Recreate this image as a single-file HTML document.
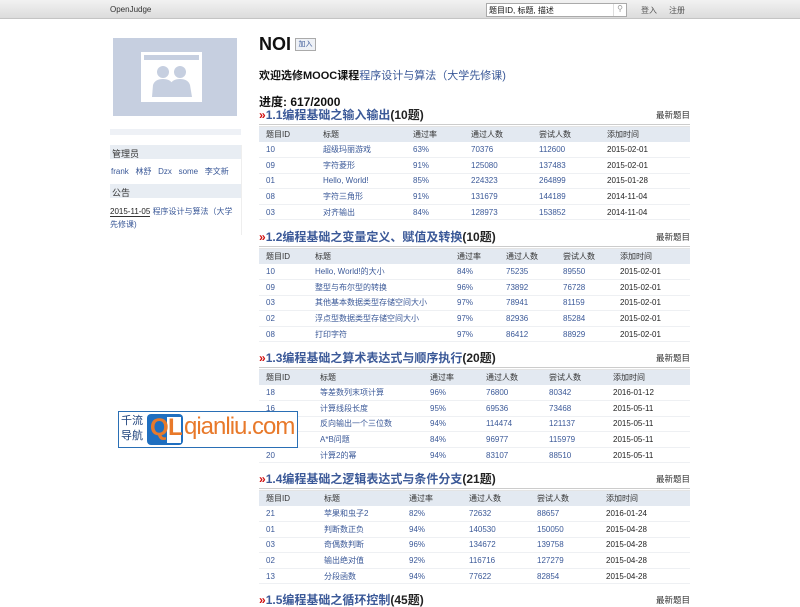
<!DOCTYPE html>
<html><head><meta charset="utf-8"><style>
*{margin:0;padding:0;box-sizing:border-box}
body{width:800px;height:599px;overflow:hidden;background:#fff;font-family:"Liberation Sans","Noto Sans CJK SC",sans-serif;position:relative;color:#222}
.top{position:absolute;left:0;top:0;width:800px;height:19px;background:linear-gradient(#f2f2f2,#dcdcdc);border-bottom:1px solid #c4c4c4}
.a{position:absolute;white-space:nowrap}
a,.lk{color:#3b5998;text-decoration:none}
.sec{position:absolute;left:259px;width:431px}
.sec h2{position:absolute;left:0;top:0;font-size:12px;font-weight:bold;color:#222;height:13px;line-height:13px;white-space:nowrap}
.sec h2 .r{color:#d01010}
.sec h2 .t{color:#3b5998}
.sec .new{position:absolute;right:0;top:1px;font-size:8.5px;line-height:11px;color:#333}
.sec .bl{position:absolute;left:0;top:15px;width:431px;height:3px;border-top:1px solid #ccc;border-bottom:1px solid #e4e4e4}
.sec table{position:absolute;left:0;top:18px;width:431px;border-collapse:collapse;font-size:8px;table-layout:fixed}
.sec th{background:#e3e9f1;font-weight:normal;text-align:left;height:15px;padding-left:7px;color:#333}
.sec td{height:15.6px;padding-left:7px;color:#3b5998;border-bottom:1px solid #eef0f3;white-space:nowrap;overflow:hidden}
.sec td:last-child{color:#222}
</style></head><body>
<div class="top"></div>
<div class="a" style="left:110px;top:5px;font-size:8px;color:#333">OpenJudge</div>
<div class="a" style="left:486px;top:3px;width:141px;height:14px;border:1px solid #aaa;background:#fff"></div>
<div class="a" style="left:489px;top:5px;font-size:8px;color:#111">题目ID, 标题, 描述</div>
<div class="a" style="left:613px;top:4px;width:13px;height:12px;border-left:1px solid #ddd;font-size:8px;color:#999;text-align:center">&#9906;</div>
<div class="a" style="left:641px;top:5px;font-size:8px;color:#555">登入</div>
<div class="a" style="left:669px;top:5px;font-size:8px;color:#555">注册</div>

<div class="a" style="left:113px;top:38px;width:124px;height:78px;background:#c6cfe0"></div>
<div class="a" style="left:141px;top:52px;width:61px;height:50px;background:#fff"></div>
<div class="a" style="left:144px;top:55px;width:55px;height:5px;background:#c6cfe0"></div>
<svg class="a" style="left:150px;top:63px" width="44" height="34"><g fill="#c6cfe0"><circle cx="13" cy="9" r="6"/><path d="M2 34 L3 22 Q5 16 13 16 Q21 16 23 22 L24 34Z"/><circle cx="30" cy="9" r="6"/><path d="M19 34 L20 22 Q22 16 30 16 Q38 16 40 22 L42 34Z"/></g></svg>
<div class="a" style="left:110px;top:129px;width:131px;height:6px;background:#eef1f6"></div>
<div class="a" style="left:241px;top:145px;width:1px;height:90px;background:#eee"></div>
<div class="a" style="left:110px;top:145px;width:131px;height:14px;background:#e8edf3;font-size:9px;padding:2px 2px;color:#333">管理员</div>
<div class="a lk" style="left:111px;top:166px;font-size:8px">frank&nbsp;&nbsp; 林舒&nbsp;&nbsp; Dzx&nbsp;&nbsp; some&nbsp;&nbsp; 李文新</div>
<div class="a" style="left:110px;top:184px;width:131px;height:14px;background:#e8edf3;font-size:9px;padding:2px 2px;color:#333">公告</div>
<div class="a" style="left:110px;top:205px;width:130px;font-size:8px;line-height:13px;white-space:normal"><span style="border-bottom:1px solid #333;color:#222">2015-11-05</span> <span class="lk">程序设计与算法（大学先修课)</span></div>

<div class="a" style="left:259px;top:34px;font-size:18px;line-height:20px;font-weight:bold;color:#111">NOI</div>
<div class="a" style="left:295px;top:38px;width:21px;height:13px;border:1px solid #aaa;background:#eef1f6;font-size:7px;color:#3b5998;text-align:center;line-height:11px">加入</div>
<div class="a" style="left:259px;top:69px;font-size:11px;line-height:14px;font-weight:bold;color:#111">欢迎选修MOOC课程<span style="color:#3b5998;font-weight:normal">程序设计与算法（大学先修课)</span></div>
<div class="a" style="left:259px;top:95px;font-size:12px;line-height:14px;font-weight:bold;color:#111">进度: 617/2000</div>

<div class="sec" style="top:109px"><h2><span class="r">»</span><span class="t">1.1编程基础之输入输出</span>(10题)</h2><span class="new">最新题目</span><div class="bl"></div>
<table><colgroup><col style="width:57px"><col style="width:90px"><col style="width:58px"><col style="width:68px"><col style="width:68px"><col></colgroup>
<tr><th>题目ID</th><th>标题</th><th>通过率</th><th>通过人数</th><th>尝试人数</th><th>添加时间</th></tr>
<tr><td>10</td><td>超级玛丽游戏</td><td>63%</td><td>70376</td><td>112600</td><td>2015-02-01</td></tr>
<tr><td>09</td><td>字符菱形</td><td>91%</td><td>125080</td><td>137483</td><td>2015-02-01</td></tr>
<tr><td>01</td><td>Hello, World!</td><td>85%</td><td>224323</td><td>264899</td><td>2015-01-28</td></tr>
<tr><td>08</td><td>字符三角形</td><td>91%</td><td>131679</td><td>144189</td><td>2014-11-04</td></tr>
<tr><td>03</td><td>对齐输出</td><td>84%</td><td>128973</td><td>153852</td><td>2014-11-04</td></tr></table></div>

<div class="sec" style="top:231px"><h2><span class="r">»</span><span class="t">1.2编程基础之变量定义、赋值及转换</span>(10题)</h2><span class="new">最新题目</span><div class="bl"></div>
<table><colgroup><col style="width:49px"><col style="width:142px"><col style="width:49px"><col style="width:57px"><col style="width:57px"><col></colgroup>
<tr><th>题目ID</th><th>标题</th><th>通过率</th><th>通过人数</th><th>尝试人数</th><th>添加时间</th></tr>
<tr><td>10</td><td>Hello, World!的大小</td><td>84%</td><td>75235</td><td>89550</td><td>2015-02-01</td></tr>
<tr><td>09</td><td>整型与布尔型的转换</td><td>96%</td><td>73892</td><td>76728</td><td>2015-02-01</td></tr>
<tr><td>03</td><td>其他基本数据类型存储空间大小</td><td>97%</td><td>78941</td><td>81159</td><td>2015-02-01</td></tr>
<tr><td>02</td><td>浮点型数据类型存储空间大小</td><td>97%</td><td>82936</td><td>85284</td><td>2015-02-01</td></tr>
<tr><td>08</td><td>打印字符</td><td>97%</td><td>86412</td><td>88929</td><td>2015-02-01</td></tr></table></div>

<div class="sec" style="top:352px"><h2><span class="r">»</span><span class="t">1.3编程基础之算术表达式与顺序执行</span>(20题)</h2><span class="new">最新题目</span><div class="bl"></div>
<table><colgroup><col style="width:54px"><col style="width:110px"><col style="width:56px"><col style="width:63px"><col style="width:64px"><col></colgroup>
<tr><th>题目ID</th><th>标题</th><th>通过率</th><th>通过人数</th><th>尝试人数</th><th>添加时间</th></tr>
<tr><td>18</td><td>等差数列末项计算</td><td>96%</td><td>76800</td><td>80342</td><td>2016-01-12</td></tr>
<tr><td>16</td><td>计算线段长度</td><td>95%</td><td>69536</td><td>73468</td><td>2015-05-11</td></tr>
<tr><td>13</td><td>反向输出一个三位数</td><td>94%</td><td>114474</td><td>121137</td><td>2015-05-11</td></tr>
<tr><td>19</td><td>A*B问题</td><td>84%</td><td>96977</td><td>115979</td><td>2015-05-11</td></tr>
<tr><td>20</td><td>计算2的幂</td><td>94%</td><td>83107</td><td>88510</td><td>2015-05-11</td></tr></table></div>

<div class="sec" style="top:473px"><h2><span class="r">»</span><span class="t">1.4编程基础之逻辑表达式与条件分支</span>(21题)</h2><span class="new">最新题目</span><div class="bl"></div>
<table><colgroup><col style="width:58px"><col style="width:85px"><col style="width:60px"><col style="width:68px"><col style="width:69px"><col></colgroup>
<tr><th>题目ID</th><th>标题</th><th>通过率</th><th>通过人数</th><th>尝试人数</th><th>添加时间</th></tr>
<tr><td>21</td><td>苹果和虫子2</td><td>82%</td><td>72632</td><td>88657</td><td>2016-01-24</td></tr>
<tr><td>01</td><td>判断数正负</td><td>94%</td><td>140530</td><td>150050</td><td>2015-04-28</td></tr>
<tr><td>03</td><td>奇偶数判断</td><td>96%</td><td>134672</td><td>139758</td><td>2015-04-28</td></tr>
<tr><td>02</td><td>输出绝对值</td><td>92%</td><td>116716</td><td>127279</td><td>2015-04-28</td></tr>
<tr><td>13</td><td>分段函数</td><td>94%</td><td>77622</td><td>82854</td><td>2015-04-28</td></tr></table></div>

<div class="sec" style="top:594px"><h2><span class="r">»</span><span class="t">1.5编程基础之循环控制</span>(45题)</h2><span class="new">最新题目</span></div>

<div class="a" style="left:118px;top:411px;width:180px;height:37px;border:1.5px solid #2a6fb5;background:#fff"></div>
<div class="a" style="left:121px;top:414px;font-size:11px;line-height:15px;color:#1a3f7a">千流<br>导航</div>
<div class="a" style="left:147px;top:414px;width:36px;height:31px;background:#1f6fc0;border-radius:4px"></div>
<div class="a" style="left:167px;top:417px;width:14px;height:26px;background:#fff"></div>
<div class="a" style="left:150px;top:413px;font-size:24px;line-height:30px;font-weight:bold;color:#e8792a">Q</div>
<div class="a" style="left:168px;top:413px;font-size:24px;line-height:30px;font-weight:bold;color:#e8792a">L</div>
<div class="a" style="left:184px;top:412px;font-size:24px;line-height:30px;color:#e8792a;letter-spacing:-1px">qianliu.com</div>
</body></html>
